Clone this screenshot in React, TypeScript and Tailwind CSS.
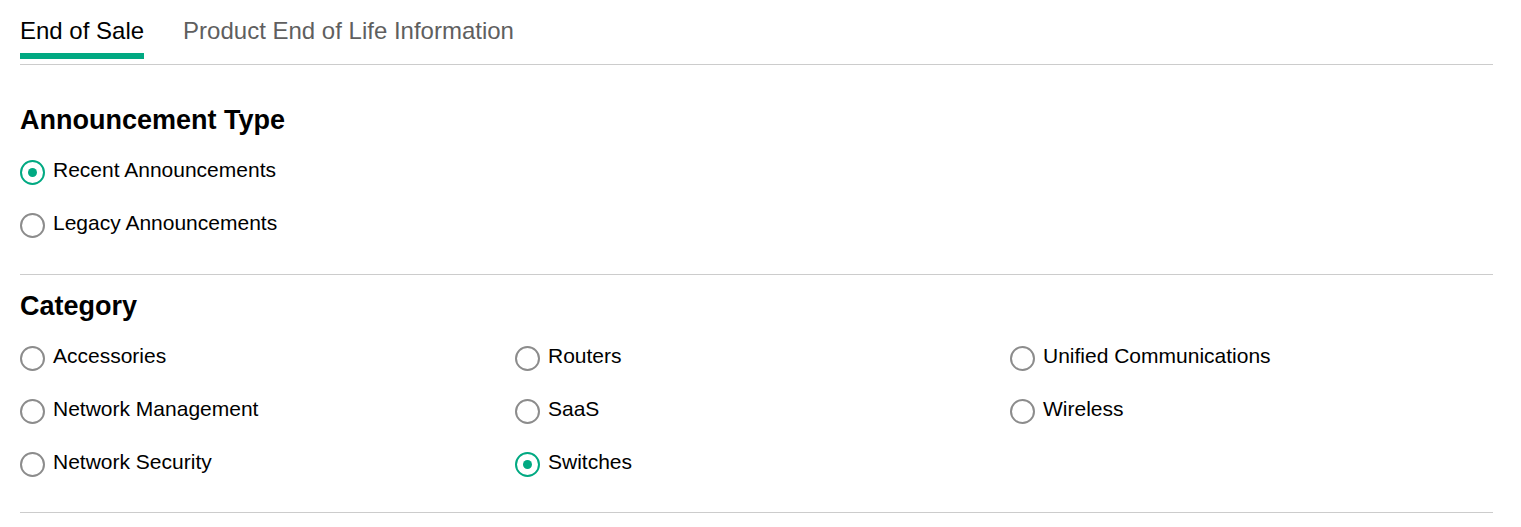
import React from "react";

const font = { fontFamily: '"Liberation Sans", Arial, sans-serif' };

function Radio({ label, checked }: { label: string; checked?: boolean }) {
  return (
    <div className="flex h-[53px] items-center gap-[8px]">
      <span
        className={
          "flex h-[25px] w-[25px] shrink-0 items-center justify-center rounded-full border-2 " +
          (checked ? "border-[#01a982]" : "border-[#8c8c8c]")
        }
      >
        {checked && <span className="h-[9px] w-[9px] rounded-full bg-[#01a982]" />}
      </span>
      <span className="mb-[5px] text-[21px] leading-[24px] text-black">{label}</span>
    </div>
  );
}

export default function App() {
  return (
    <div className="min-h-[527px] bg-white pl-[20px]" style={font}>
      <div className="w-[1473px]">
        {/* Tabs */}
        <div className="flex gap-[39px] border-b border-[#cccccc] pt-[17px]">
          <div className="flex flex-col">
            <span className="text-[24px] leading-[28px] text-black">End of Sale</span>
            <span className="mt-[8px] mb-[5px] h-[6px] bg-[#01a982]" />
          </div>
          <div className="flex flex-col">
            <span className="text-[24px] leading-[28px] text-[#5f5f5f]">
              Product End of Life Information
            </span>
          </div>
        </div>

        {/* Announcement Type */}
        <div className="border-b border-[#cccccc] pt-[39px] pb-[22px]">
          <h2 className="mb-[10px] text-[27px] font-bold leading-[32px] text-black">
            Announcement Type
          </h2>
          <Radio label="Recent Announcements" checked />
          <Radio label="Legacy Announcements" />
        </div>

        {/* Category */}
        <div className="border-b border-[#cccccc] pt-[15px] pb-[21px]">
          <h2 className="mb-[10px] text-[27px] font-bold leading-[32px] text-black">Category</h2>
          <div className="grid grid-cols-[495px_495px_1fr]">
            <div className="flex flex-col">
              <Radio label="Accessories" />
              <Radio label="Network Management" />
              <Radio label="Network Security" />
            </div>
            <div className="flex flex-col">
              <Radio label="Routers" />
              <Radio label="SaaS" />
              <Radio label="Switches" checked />
            </div>
            <div className="flex flex-col">
              <Radio label="Unified Communications" />
              <Radio label="Wireless" />
            </div>
          </div>
        </div>
      </div>
    </div>
  );
}
